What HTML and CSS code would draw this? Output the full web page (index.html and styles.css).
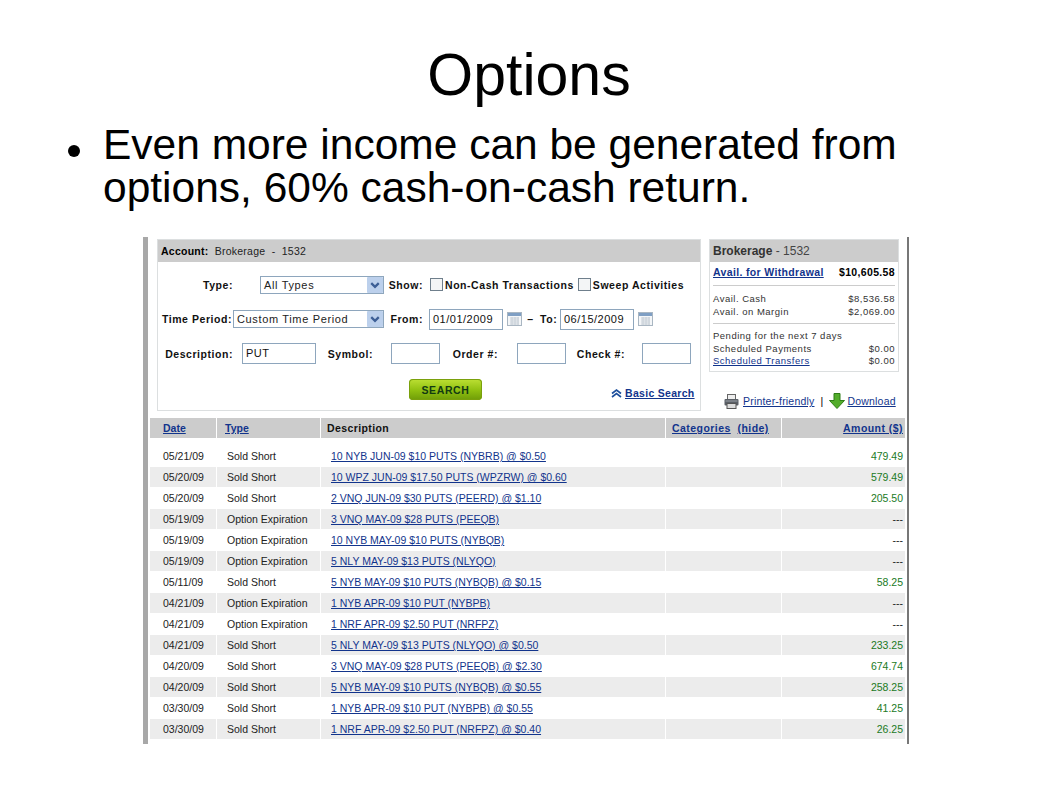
FILE: index.html
```html
<!DOCTYPE html>
<html lang="en">
<head>
<meta charset="UTF-8">
<title>Options</title>
<link rel="stylesheet" href="styles.css">
</head>
<body>
<svg class="defs" width="0" height="0">
  <defs>
    <symbol id="cal" viewBox="0 0 15 14">
      <rect x="0.5" y="0.5" width="14" height="13" fill="#f4f6f8" stroke="#a9b6c2"/>
      <rect x="1" y="1" width="13" height="3" fill="#7f9fc4"/>
      <path d="M3 6h9M3 8h9M3 10h9M3 12h9M5 5v8M8 5v8M11 5v8" stroke="#c6ced6" stroke-width="1" fill="none"/>
    </symbol>
    <symbol id="arrow" viewBox="0 0 17 17">
      <rect width="17" height="17" rx="1" fill="#bcd0ec"/>
      <path d="M4.5 6.5 8.5 10.5 12.5 6.5" stroke="#3d5f96" stroke-width="2.4" fill="none"/>
    </symbol>
  </defs>
</svg>

<h1 class="titulo">Options</h1>
<ul class="bullets">
  <li>Even more income can be generated from options, 60% cash-on-cash return.</li>
</ul>

<div class="shot">
  <div class="topo">
    <div class="busca">
      <div class="busca-head"><b>Account:</b> <span>Brokerage&nbsp; - &nbsp;1532</span></div>
      <div class="linha l1">
        <label class="lb w-type">Type:</label>
        <div class="sel w-sel1"><span>All Types</span><svg><use href="#arrow"/></svg></div>
        <label class="lb w-show">Show:</label>
        <i class="chk"></i><label class="lb c1">Non-Cash Transactions</label>
        <i class="chk"></i><label class="lb">Sweep Activities</label>
      </div>
      <div class="linha l2">
        <label class="lb w-per">Time Period:</label>
        <div class="sel w-sel2"><span>Custom Time Period</span><svg><use href="#arrow"/></svg></div>
        <label class="lb w-from">From:</label>
        <div class="inp w-date">01/01/2009</div>
        <svg class="cal"><use href="#cal"/></svg>
        <span class="lb traco">–</span>
        <label class="lb w-to">To:</label>
        <div class="inp w-date">06/15/2009</div>
        <svg class="cal"><use href="#cal"/></svg>
      </div>
      <div class="linha l3">
        <label class="lb w-desc">Description:</label>
        <div class="inp w-put">PUT</div>
        <label class="lb w-sym">Symbol:</label>
        <div class="inp w-min"></div>
        <label class="lb w-ord">Order #:</label>
        <div class="inp w-min"></div>
        <label class="lb w-chk">Check #:</label>
        <div class="inp w-min"></div>
      </div>
      <div class="acoes">
        <button class="btn-search">SEARCH</button>
        <a class="basic">
          <svg width="11" height="9" viewBox="0 0 11 9"><path d="M1 4.5 5.5 1 10 4.5M1 8 5.5 4.5 10 8" stroke="#1d4f9c" stroke-width="1.6" fill="none"/></svg>
          <u>Basic Search</u>
        </a>
      </div>
    </div>

    <div class="lateral">
      <div class="saldo">
        <div class="saldo-head"><b>Brokerage</b> - 1532</div>
        <div class="saldo-sec sec1">
          <div class="sl forte"><a>Avail. for Withdrawal</a><b>$10,605.58</b></div>
        </div>
        <div class="saldo-sec sec2">
          <div class="sl"><span>Avail. Cash</span><span>$8,536.58</span></div>
          <div class="sl"><span>Avail. on Margin</span><span>$2,069.00</span></div>
        </div>
        <div class="saldo-sec sec3">
          <div class="sl"><span>Pending for the next 7 days</span></div>
          <div class="sl"><span>Scheduled Payments</span><span>$0.00</span></div>
          <div class="sl"><a>Scheduled Transfers</a><span>$0.00</span></div>
        </div>
      </div>
      <div class="ferramentas">
        <svg width="15" height="15" viewBox="0 0 15 15">
          <rect x="3.5" y="0.5" width="8" height="5" fill="#eee" stroke="#666"/>
          <rect x="0.5" y="5" width="14" height="6.5" rx="1" fill="#5a5f66"/>
          <rect x="3" y="9.5" width="9" height="5" fill="#ddd" stroke="#555"/>
          <path d="M1.5 7h12" stroke="#9aa0a6"/>
        </svg>
        <a class="t-print">Printer-friendly</a>
        <span class="sep">|</span>
        <svg class="seta" width="16" height="16" viewBox="0 0 16 16"><path d="M5 0.5h6v7h4.5L8 15.5 0.5 7.5H5z" fill="#53ad2b" stroke="#2f7d17"/></svg>
        <a>Download</a>
      </div>
    </div>
  </div>

  <div class="tabela">
    <div class="tr th">
      <div><a>Date</a></div><div><a>Type</a></div><div>Description</div>
      <div><a>Categories</a>&nbsp; <a>(hide)</a></div><div class="dir"><a>Amount ($)</a></div>
    </div>
    <div class="corpo">
      <div class="tr"><div>05/21/09</div><div>Sold Short</div><div><a>10 NYB JUN-09 $10 PUTS (NYBRB) @ $0.50</a></div><div></div><div class="dir pos">479.49</div></div>
      <div class="tr"><div>05/20/09</div><div>Sold Short</div><div><a>10 WPZ JUN-09 $17.50 PUTS (WPZRW) @ $0.60</a></div><div></div><div class="dir pos">579.49</div></div>
      <div class="tr"><div>05/20/09</div><div>Sold Short</div><div><a>2 VNQ JUN-09 $30 PUTS (PEERD) @ $1.10</a></div><div></div><div class="dir pos">205.50</div></div>
      <div class="tr"><div>05/19/09</div><div>Option Expiration</div><div><a>3 VNQ MAY-09 $28 PUTS (PEEQB)</a></div><div></div><div class="dir">---</div></div>
      <div class="tr"><div>05/19/09</div><div>Option Expiration</div><div><a>10 NYB MAY-09 $10 PUTS (NYBQB)</a></div><div></div><div class="dir">---</div></div>
      <div class="tr"><div>05/19/09</div><div>Option Expiration</div><div><a>5 NLY MAY-09 $13 PUTS (NLYQO)</a></div><div></div><div class="dir">---</div></div>
      <div class="tr"><div>05/11/09</div><div>Sold Short</div><div><a>5 NYB MAY-09 $10 PUTS (NYBQB) @ $0.15</a></div><div></div><div class="dir pos">58.25</div></div>
      <div class="tr"><div>04/21/09</div><div>Option Expiration</div><div><a>1 NYB APR-09 $10 PUT (NYBPB)</a></div><div></div><div class="dir">---</div></div>
      <div class="tr"><div>04/21/09</div><div>Option Expiration</div><div><a>1 NRF APR-09 $2.50 PUT (NRFPZ)</a></div><div></div><div class="dir">---</div></div>
      <div class="tr"><div>04/21/09</div><div>Sold Short</div><div><a>5 NLY MAY-09 $13 PUTS (NLYQO) @ $0.50</a></div><div></div><div class="dir pos">233.25</div></div>
      <div class="tr"><div>04/20/09</div><div>Sold Short</div><div><a>3 VNQ MAY-09 $28 PUTS (PEEQB) @ $2.30</a></div><div></div><div class="dir pos">674.74</div></div>
      <div class="tr"><div>04/20/09</div><div>Sold Short</div><div><a>5 NYB MAY-09 $10 PUTS (NYBQB) @ $0.55</a></div><div></div><div class="dir pos">258.25</div></div>
      <div class="tr"><div>03/30/09</div><div>Sold Short</div><div><a>1 NYB APR-09 $10 PUT (NYBPB) @ $0.55</a></div><div></div><div class="dir pos">41.25</div></div>
      <div class="tr"><div>03/30/09</div><div>Sold Short</div><div><a>1 NRF APR-09 $2.50 PUT (NRFPZ) @ $0.40</a></div><div></div><div class="dir pos">26.25</div></div>
    </div>
  </div>
</div>
</body>
</html>
```

FILE: styles.css
```css
:root { --azul:#12348c; --cinza:#cccccc; --borda:#dcdfe0; --campo:#8ea6bd; --verde:#217a1e; }
* { box-sizing:border-box; margin:0; padding:0; }
body {
  font-family:"Liberation Sans",Arial,sans-serif;
  background:white; color:#000; width:1058px; height:794px; overflow:hidden;
}
.defs { position:absolute; }

/* slide */
.titulo { font-size:59px; font-weight:normal; text-align:center; line-height:68px; padding-top:41px; height:109px; }
.bullets { list-style:none; padding-left:103px; width:920px; height:128px; font-size:42.5px; line-height:43px; padding-top:14px; }
.bullets li { position:relative; }
.bullets li::before {
  content:""; position:absolute; left:-35px; top:22px;
  width:12px; height:12px; border-radius:50%; background:#000;
}

/* pasted screenshot */
.shot {
  margin-left:143px; width:766px; height:507px; background:white;
  border-left:5px solid #a8a8a8; border-right:2px solid #777;
  padding:2px 0 0 0; font-size:10.5px;
}
.topo { display:flex; align-items:flex-start; height:179px; padding-left:9px; }
.busca { width:544px; height:172px; border:1px solid var(--borda); }
.busca-head { background:var(--cinza); height:22px; line-height:22px; padding-left:3px; color:#222; font-size:10.5px; letter-spacing:.25px; }
.busca-head b { color:#000; margin-right:3px; }
.lb { font-weight:bold; font-size:10.5px; color:#111; white-space:nowrap; letter-spacing:.55px; }
.linha { display:flex; align-items:center; }
.l1 { margin-top:13px; height:19px; }
.l2 { margin-top:15px; height:20px; }
.l3 { margin-top:14px; height:21px; }
.w-type { width:75px; text-align:right; margin-right:27px; }
.w-sel1 { width:124px; }
.w-show { width:39px; text-align:right; margin-right:7px; }
.c1 { margin-right:4px; }
.chk { width:13px; height:13px; border:1px solid #6f7f8c; background:#f3f5f6; margin-right:2px; }
.w-per { width:74px; text-align:right; }
.w-sel2 { width:151px; margin-left:1px; }
.w-from { width:39px; text-align:right; margin-right:6px; }
.inp {
  height:21px; border:1px solid var(--campo); background:white;
  font-size:11px; line-height:19px; padding-left:3px; color:#111; letter-spacing:.5px;
}
.w-date { width:74px; }
.cal { width:15px; height:14px; margin:0 3px 0 4px; }
.traco { width:11px; text-align:center; margin-right:4px; }
.w-to { width:19px; margin-right:1px; }
.sel {
  height:18px; border:1px solid var(--campo); display:flex; align-items:center;
  justify-content:space-between; padding:0 0 0 3px; font-size:11px; letter-spacing:.65px; color:#222; background:white;
}
.sel svg { width:16px; height:16px; }
.w-desc { width:75px; text-align:right; margin-right:9px; }
.w-put { width:74px; }
.w-sym { width:57px; text-align:right; margin-right:18px; }
.w-min { width:49px; }
.w-ord { width:58px; text-align:right; margin-right:19px; }
.w-chk { width:59px; text-align:right; margin-right:17px; }
.acoes { display:flex; margin-top:15px; height:24px; }
.btn-search {
  margin-left:251px; width:73px; height:21px; border:none; border-radius:4px;
  background:linear-gradient(#bde034,#8fbf10 55%,#6f9c08);
  box-shadow:inset 0 0 0 1px #7aa00c; font:bold 10.5px "Liberation Sans",Arial,sans-serif;
  letter-spacing:.6px; color:#123a12;
}
.basic { margin-left:129px; margin-top:7px; height:14px; color:var(--azul); font-weight:bold; font-size:10.5px; letter-spacing:.3px; white-space:nowrap; display:flex; align-items:center; gap:3px; }

.lateral { width:190px; margin-left:8px; }
.saldo { height:133px; border:1px solid var(--borda); }
.saldo-head { background:var(--cinza); height:22px; line-height:22px; padding-left:3px; color:#444; font-size:12px; }
.saldo-head b { color:#333; }
.saldo-sec { margin:0 3px 0 3px; }
.sl { display:flex; justify-content:space-between; height:13px; line-height:13px; font-size:9.5px; letter-spacing:.5px; color:#333; white-space:nowrap; }
.sl a, .ferramentas a, .tabela a { color:var(--azul); text-decoration:underline; }
.sec1 { height:24px; padding-top:3px; border-bottom:1px solid #ccc; }
.sl.forte { font-size:10.5px; letter-spacing:.35px; height:14px; line-height:14px; color:#000; }
.sl.forte a { font-weight:bold; }
.sec2 { height:38px; padding-top:6px; border-bottom:1px solid #ccc; }
.sec3 { padding-top:6px; }
.sec3 .sl { height:12.5px; line-height:12.5px; }
.ferramentas { display:flex; align-items:center; margin-top:21px; padding-left:15px; font-size:10.5px; letter-spacing:.2px; white-space:nowrap; }
.t-print { margin-left:4px; }
.sep { margin:0 6px 0 6px; }
.seta { margin-right:2px; }

/* table */
.tabela { margin-left:2px; width:755px; }
.tr {
  display:grid; grid-template-columns:67px 104px 345px 116px 123px;
  height:21px; line-height:20px; white-space:nowrap;
}
.tr > div { padding-left:13px; border-right:1px solid white; height:20px; color:#222; }
.tr > div:nth-child(2) { padding-left:10px; }
.tr > div:nth-child(3) { padding-left:10px; }
.tr > div:nth-child(4) { padding-left:6px; }
.tr > div.dir { text-align:right; padding-right:2px; padding-left:0; border-right:none; }
.th { margin-bottom:7px; }
.th > div { background:var(--cinza); font-weight:bold; color:#111; }
.th > div:nth-child(2) { padding-left:8px; }
.th > div:nth-child(3) { padding-left:6px; letter-spacing:.4px; }
.th > div:nth-child(4), .th > div:nth-child(5) { letter-spacing:.45px; }
.corpo .tr:nth-child(even) > div { background:#ececec; }
.pos { color:var(--verde) !important; }
```
